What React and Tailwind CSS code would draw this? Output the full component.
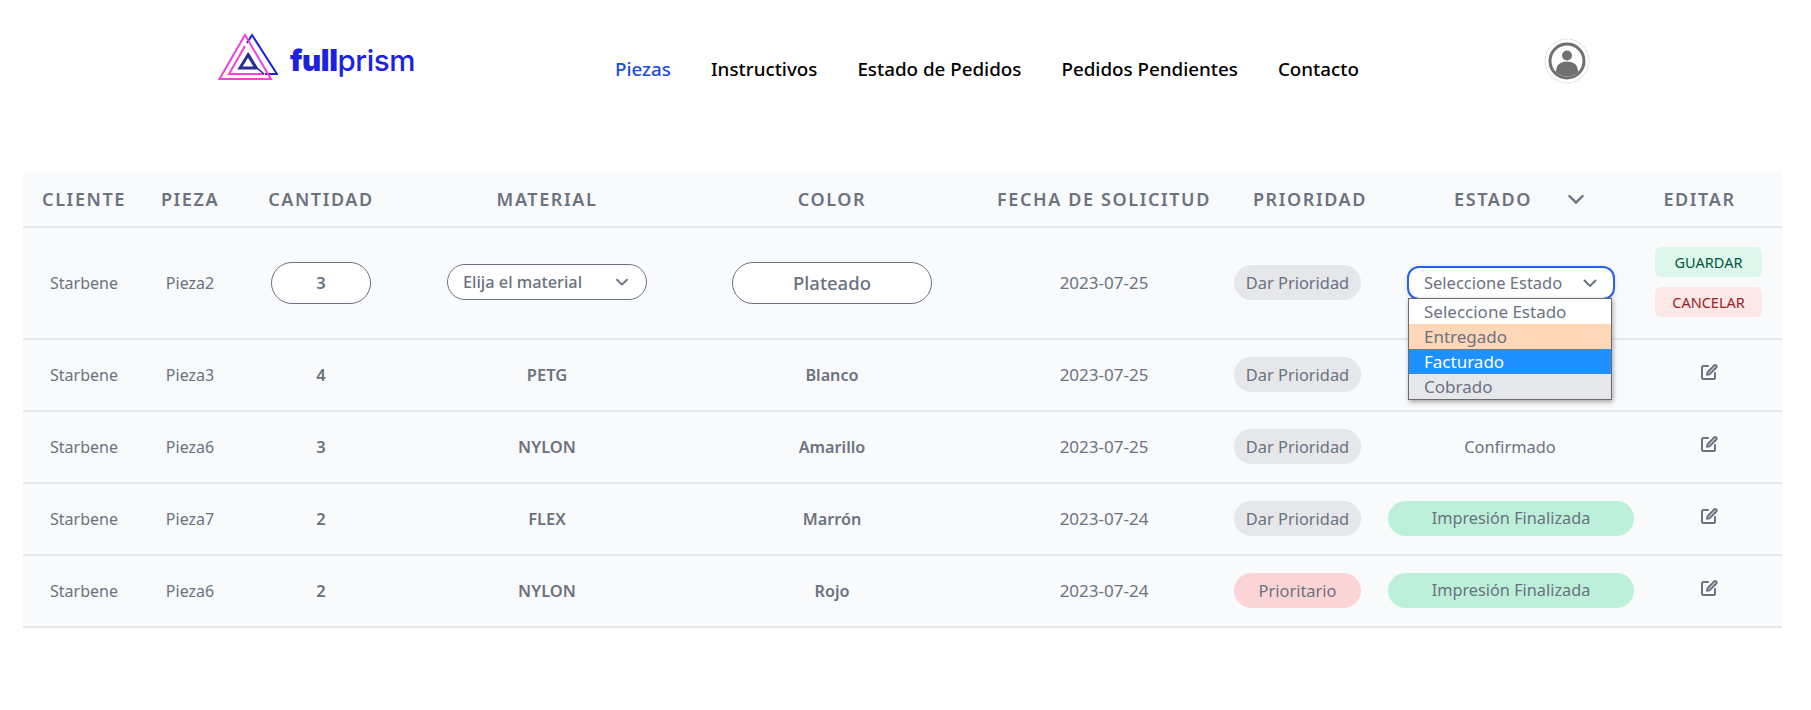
import React from "react";

const font = "font-['Noto_Sans','Open_Sans',sans-serif]";

const rows = [
  { client: "Starbene", piece: "Pieza3", qty: 4, material: "PETG", color: "Blanco", date: "2023-07-25", prio: "Dar Prioridad", estado: null },
  { client: "Starbene", piece: "Pieza6", qty: 3, material: "NYLON", color: "Amarillo", date: "2023-07-25", prio: "Dar Prioridad", estado: "Confirmado" },
  { client: "Starbene", piece: "Pieza7", qty: 2, material: "FLEX", color: "Marrón", date: "2023-07-24", prio: "Dar Prioridad", estado: "Impresión Finalizada" },
  { client: "Starbene", piece: "Pieza6", qty: 2, material: "NYLON", color: "Rojo", date: "2023-07-24", prio: "Prioritario", estado: "Impresión Finalizada" },
];

function Chevron({ className }) {
  return (
    <svg viewBox="0 0 20 20" fill="none" stroke="currentColor" strokeWidth="2" strokeLinecap="round" strokeLinejoin="round" className={className}>
      <path d="M4.500 7.500l5.500 5.500 5.500-5.500" />
    </svg>
  );
}

function EditIcon() {
  return (
    <svg viewBox="0 0 20 20" fill="none" stroke="#6b7280" strokeWidth="2" strokeLinecap="round" strokeLinejoin="round" className="w-[20px] h-[20px] mx-auto">
      <path d="M9 4H4.500A1.500 1.500 0 0 0 3 5.500v10A1.500 1.500 0 0 0 4.500 17h10a1.500 1.500 0 0 0 1.500-1.500V11" />
      <path d="M15.500 3.200a1.500 1.500 0 0 1 2 2L10.500 12.200 8 12.800l.6-2.500z" />
    </svg>
  );
}

function Logo() {
  return (
    <div className="flex items-center gap-[12px]">
      <svg viewBox="0 0 60 50" className="w-[60px] h-[50px]" fill="none">
        <path d="M47 42 H59 L34 3 L29 11" stroke="#1d1fd8" strokeWidth="2" />
        <path d="M27 3 L1.500 47 H53 Z" stroke="#f043d8" strokeWidth="2" />
        <path d="M27 14 L11 42 H46" stroke="#f043d8" strokeWidth="2" />
        <path d="M30 21 L39 36 L46 42" stroke="#1d1fd8" strokeWidth="1.500" />
        <path d="M30 23 L38 36 H22 Z" stroke="#27308f" strokeWidth="3" />
      </svg>
      <span className="font-['Inter',sans-serif] text-[29.5px] leading-none tracking-[-0.4px] text-[#1d22e0] mt-[8px]">
        <span className="font-black">full</span><span className="font-medium">prism</span>
      </span>
    </div>
  );
}

function Avatar() {
  return (
    <svg viewBox="0 0 48 48" className="w-[48px] h-[48px]" fill="none">
      <circle cx="24" cy="24" r="22" stroke="#dcdcdc" strokeWidth="1" strokeDasharray="4 1" />
      <circle cx="24" cy="24" r="17" stroke="#707070" strokeWidth="3" />
      <circle cx="24" cy="18.500" r="5" fill="#707070" />
      <path d="M13 35c0-7 4-10.500 11-10.500S35 28 35 35c-3 3-7 4.500-11 4.500S16 38 13 35z" fill="#707070" />
    </svg>
  );
}

function Status({ value }) {
  if (!value) return null;
  if (value === "Confirmado") return <span className="text-[16.4px]">{value}</span>;
  return <div className="-ml-px mb-[2px] w-[246px] h-[35px] leading-[35px] rounded-full bg-[#bcf0da] text-[16.3px]">{value}</div>;
}

export default function App() {
  return (
    <div className={`${font} bg-white h-[710px] overflow-hidden text-[16px] text-[#6b7280]`}>
      <nav className="flex h-[172px] items-start">
        <div className="w-[218px] shrink-0" />
        <div className="w-[397px] shrink-0 pt-[32px]"><Logo /></div>
        <ul className="flex gap-[40px] pt-[56px] text-[18.8px] font-medium leading-[27px] text-black">
          <li className="text-[#1d4ed8]">Piezas</li>
          <li>Instructivos</li>
          <li>Estado de Pedidos</li>
          <li>Pedidos Pendientes</li>
          <li>Contacto</li>
        </ul>
        <div className="ml-[184px] pt-[37px]"><Avatar /></div>
      </nav>

      <div className="px-[23px] pr-[29px]">
        <table className="w-[1759px] table-fixed border-collapse bg-[#f9fafb]">
          <colgroup>
            <col className="w-[122px]" />
            <col className="w-[90px]" />
            <col className="w-[172px]" />
            <col className="w-[280px]" />
            <col className="w-[290px]" />
            <col className="w-[254px]" />
            <col className="w-[158px]" />
            <col className="w-[242px]" />
            <col className="w-[151px]" />
          </colgroup>
          <thead>
            <tr className="h-[55px] border-b-2 border-[#e5e7eb] text-[18px] font-semibold tracking-[1.6px] text-center">
              <th className="font-semibold">CLIENTE</th>
              <th className="font-semibold">PIEZA</th>
              <th className="font-semibold">CANTIDAD</th>
              <th className="font-semibold">MATERIAL</th>
              <th className="font-semibold">COLOR</th>
              <th className="font-semibold">FECHA DE SOLICITUD</th>
              <th className="font-semibold">PRIORIDAD</th>
              <th className="font-semibold pl-[22px]">
                <span className="inline-flex items-center gap-[32px]">ESTADO<Chevron className="w-[24px] h-[24px]" /></span>
              </th>
              <th className="font-semibold pr-[14px]">EDITAR</th>
            </tr>
          </thead>
          <tbody className="text-center">
            <tr className="h-[112px] border-b-2 border-[#e5e7eb]">
              <td>Starbene</td>
              <td>Pieza2</td>
              <td>
                <div className="mx-auto w-[100px] h-[42px] leading-[40px] rounded-full border border-[#6b7280] bg-white font-semibold text-[16.500px]">3</div>
              </td>
              <td>
                <div className="mx-auto mb-[2px] flex items-center justify-between w-[200px] h-[36px] pl-[15px] pr-[15px] rounded-full border border-[#6b7280] bg-white font-medium text-[16.300px]">
                  Elija el material
                  <Chevron className="w-[18px] h-[18px]" />
                </div>
              </td>
              <td>
                <div className="mx-auto w-[200px] h-[42px] leading-[40px] rounded-full border border-[#6b7280] bg-white font-medium text-[18.500px]">Plateado</div>
              </td>
              <td className="text-[17px]">2023-07-25</td>
              <td><div className="ml-[3px] mb-[2px] w-[127px] h-[35px] leading-[35px] rounded-full bg-[#e5e7eb] text-[16.400px]">Dar Prioridad</div></td>
              <td className="relative">
                <div className="ml-[18px] flex items-center justify-between w-[208px] h-[34px] pl-[15px] pr-[13px] rounded-[12px] border-2 border-[#2563eb] bg-white text-[16.500px] shadow-[0_1px_4px_rgba(0,0,0,0.15)]">
                  Seleccione Estado
                  <Chevron className="w-[20px] h-[20px]" />
                </div>
                <ul className="absolute z-10 left-[19px] top-[70px] w-[204px] border border-[#6b6b6b] bg-white text-left shadow-[1px_2px_5px_rgba(0,0,0,0.35)] leading-[25px] text-[17px]">
                  <li className="pl-[15px] h-[25px]">Seleccione Estado</li>
                  <li className="pl-[15px] h-[25px] bg-[#fed7b8]">Entregado</li>
                  <li className="pl-[15px] h-[25px] bg-[#1e90ff] text-white">Facturado</li>
                  <li className="pl-[15px] h-[25px] bg-[#e5e7eb]">Cobrado</li>
                </ul>
              </td>
              <td className="pl-[4px] pb-[2px]">
                <div className="flex flex-col items-center gap-[10px] text-[14.500px]">
                  <div className="w-[107px] h-[30px] leading-[30px] rounded-[6px] bg-[#def7ec] text-[#03543f]">GUARDAR</div>
                  <div className="w-[107px] h-[30px] leading-[30px] rounded-[6px] bg-[#fde8e8] text-[#9b1c1c]">CANCELAR</div>
                </div>
              </td>
            </tr>
            {rows.map((r, i) => (
              <tr key={i} className="h-[72px] border-b-2 border-[#e5e7eb]">
                <td>{r.client}</td>
                <td>{r.piece}</td>
                <td className="font-semibold text-[16.500px]">{r.qty}</td>
                <td className="font-semibold text-[16.500px]">{r.material}</td>
                <td className="font-semibold text-[16.200px]">{r.color}</td>
                <td className="text-[17px]">{r.date}</td>
                <td>
                  <div className={`ml-[3px] mb-[2px] w-[127px] h-[35px] leading-[35px] rounded-full text-[16.400px] ${r.prio === "Prioritario" ? "bg-[#fbd5d5]" : "bg-[#e5e7eb]"}`}>{r.prio}</div>
                </td>
                <td><Status value={r.estado} /></td>
                <td className="pb-[6px] pl-[5px]"><EditIcon /></td>
              </tr>
            ))}
          </tbody>
        </table>
      </div>
    </div>
  );
}
